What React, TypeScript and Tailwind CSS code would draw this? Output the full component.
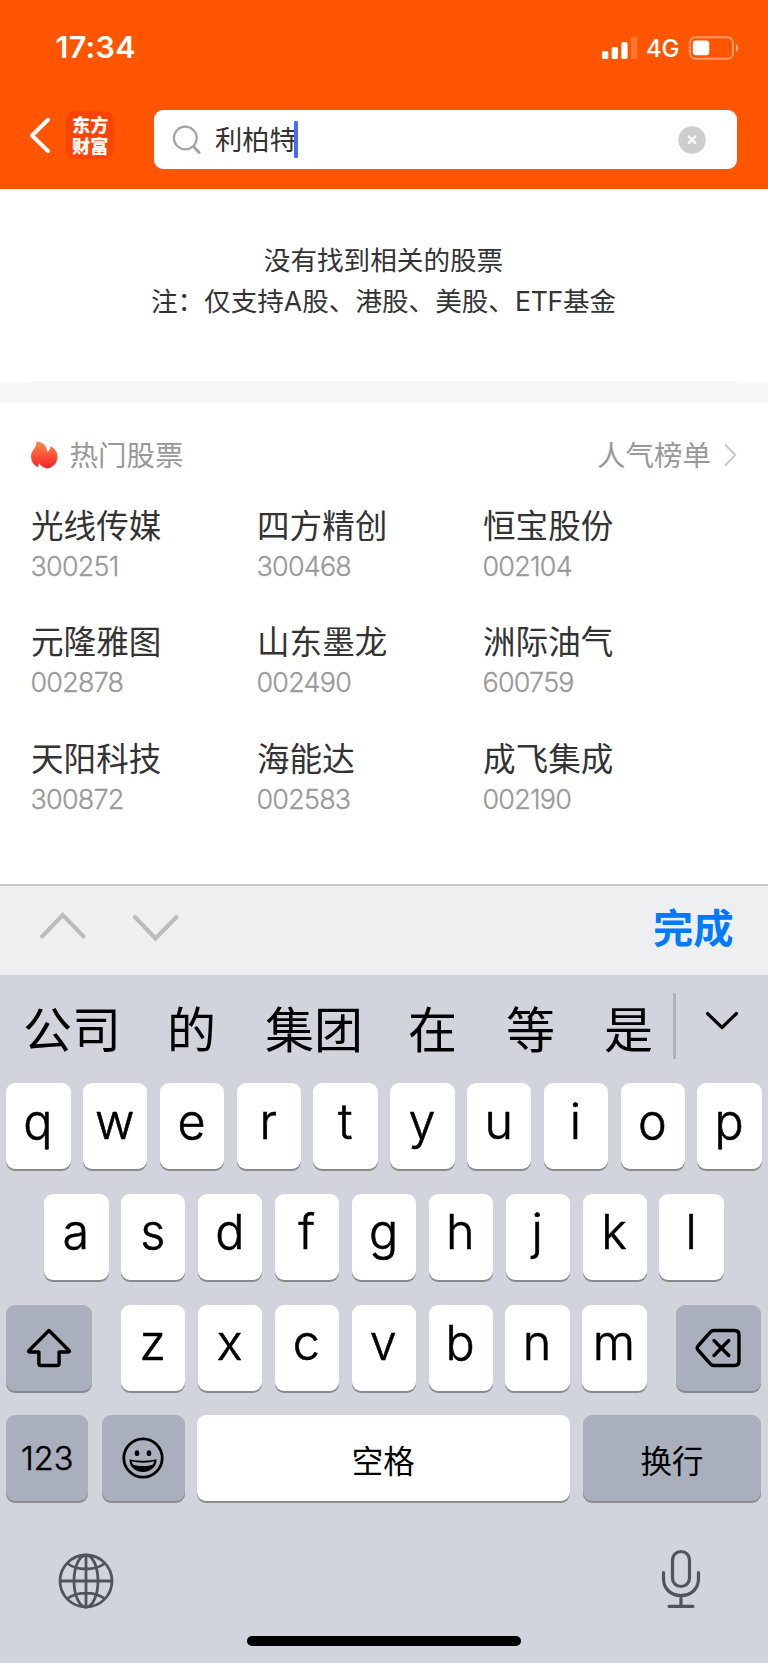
import React from "react";
import clsx from "clsx";

const stocks = [
  { name: "光线传媒", code: "300251" },
  { name: "四方精创", code: "300468" },
  { name: "恒宝股份", code: "002104" },
  { name: "元隆雅图", code: "002878" },
  { name: "山东墨龙", code: "002490" },
  { name: "洲际油气", code: "600759" },
  { name: "天阳科技", code: "300872" },
  { name: "海能达", code: "002583" },
  { name: "成飞集成", code: "002190" },
];

const candidates = [
  { text: "公司", className: "w-[98px] ml-[23px]" },
  { text: "的", className: "w-[49px] ml-[46px]" },
  { text: "集团", className: "w-[98px] ml-[49px]" },
  { text: "在", className: "w-[49px] ml-[45px]" },
  { text: "等", className: "w-[49px] ml-[49px]" },
  { text: "是", className: "w-[49px] ml-[49px]" },
];

export default function App() {
  return (
    <div className="w-[768px] h-[1663px] overflow-hidden bg-white flex flex-col font-['Inter','Noto_Sans_CJK_SC',sans-serif] text-[#333]">
      <Header />
      <EmptyResult />
      <HotStocks />
      <Keyboard />
    </div>
  );
}

const Header = () => (
  <header className="h-[188.5px] shrink-0 bg-[#ff5500] text-white">
    <div className="h-[96px] flex items-start pl-[55.5px] pr-[29px] pt-[31px]">
      <span className="text-[30.5px] leading-[32px] font-semibold tracking-[0.3px]">17:34</span>
      <div className="ml-auto mt-[1px] flex items-center h-[31px]">
        <svg width="36" height="24" viewBox="0 0 36 24" fill="#fff">
          <rect x="0" y="15" width="6.3" height="8" rx="1.8" />
          <rect x="9.7" y="11" width="6.3" height="12" rx="1.8" />
          <rect x="19.3" y="6" width="6.3" height="17" rx="1.8" />
          <rect x="29" y="1" width="6.3" height="22" rx="1.8" opacity=".2" />
        </svg>
        <span className="ml-[8px] w-[34px] text-[24px] leading-[31px] font-medium tracking-[-0.3px] pt-[1px]">4G</span>
        <svg className="ml-[8px]" width="51" height="24" viewBox="0 0 51 24" fill="none">
          <rect x="1.8" y="1.2" width="43.2" height="21.6" rx="5.6" stroke="#fff" strokeOpacity=".42" strokeWidth="2" />
          <rect x="4.8" y="4.6" width="16.4" height="14.6" rx="3" fill="#fff" />
          <path d="M48 8v8c3.2-1.6 3.2-6.4 0-8z" fill="#fff" fillOpacity=".5" />
        </svg>
      </div>
    </div>
    <div className="flex pl-[29px] pt-[14px]">
      <svg className="mt-[6px]" width="24" height="40" viewBox="0 0 24 40" fill="none" stroke="#fff" strokeWidth="4" strokeLinecap="round" strokeLinejoin="round">
        <path d="M19 3.8 3 19.5l16 15.5" />
      </svg>
      <div className="ml-[13px] mt-[1px] size-[48px] rounded-[9px] bg-[#ff4401] px-[6px] pt-[3px]">
        <p className="w-[37px] break-all font-['Noto_Sans_CJK_SC',sans-serif] font-black text-[18.2px] leading-[20.5px]">东方财富</p>
      </div>
      <div className="ml-[39.5px] w-[583.5px] h-[59px] rounded-[9px] bg-white flex items-center">
        <svg className="ml-[18px]" width="30" height="30" viewBox="0 0 30 30" fill="none" stroke="#a3a3a3" strokeWidth="2.2">
          <circle cx="13.3" cy="13" r="11.4" />
          <path d="m21.500 21.500 5.700 6" strokeWidth="2.8" strokeLinecap="round" />
        </svg>
        <span className="ml-[13.5px] mt-[2px] text-[27.3px] leading-[40px] text-[#333]">利柏特</span>
        <span className="-ml-[2.5px] w-[4px] h-[37px] rounded-[1px] bg-[#4a6cf5]" />
        <svg className="ml-auto mr-[31.5px]" width="28" height="28" viewBox="0 0 28 28" fill="none">
          <circle cx="14" cy="14" r="13.7" fill="#ccc" />
          <path d="m10.800 10.500 6.400 6.400m0-6.400-6.400 6.400" stroke="#fff" strokeWidth="2.4" strokeLinecap="round" />
        </svg>
      </div>
    </div>
  </header>
);

const EmptyResult = () => (
  <section className="h-[214.5px] shrink-0 flex flex-col">
    <div className="pt-[51px] pr-[1px] text-center text-[26.6px] leading-[41.3px]">
      <p>没有找到相关的股票</p>
      <p>
        注：仅支持A股、港股、美股、<span className="tracking-[-0.3px]">ETF</span>基金
      </p>
    </div>
    <div className="mt-auto mx-[31px] h-[2px] bg-[#f5f5f6]" />
    <div className="h-[20px] bg-[#f6f7f9]" />
  </section>
);

const HotStocks = () => (
  <section className="h-[481px] shrink-0 px-[31px]">
    <div className="flex items-center pt-[32px] h-[72px] text-[28.5px] leading-[40px] text-[#999]">
      <Flame />
      <span className="ml-[11.5px] mt-[1px]">热门股票</span>
      <span className="ml-auto mt-[1px]">人气榜单</span>
      <svg className="ml-[12px]" width="14" height="24" viewBox="0 0 14 24" fill="none" stroke="#c8c8c8" strokeWidth="2">
        <path d="m2 1.500 10.300 10.500L2 22.500" />
      </svg>
    </div>
    <div className="grid grid-cols-[226px_226px_226px] auto-rows-[116.7px] pt-[30.5px]">
      {stocks.map((stock) => (
        <div key={stock.code}>
          <p className="text-[32.6px] leading-[40px]">{stock.name}</p>
          <p className="-ml-[0.5px] text-[26.9px] leading-[41px] font-light text-[#999] tracking-[-0.75px] [-webkit-text-stroke:0.3px]">
            {stock.code}
          </p>
        </div>
      ))}
    </div>
  </section>
);

const Flame = () => (
  <svg width="27" height="28" viewBox="0 0 27 28">
    <defs>
      <linearGradient id="flame" x1="0" y1="0" x2="0" y2="1">
        <stop offset="0" stopColor="#fb8a48" />
        <stop offset="1" stopColor="#fb2028" />
      </linearGradient>
    </defs>
    <path
      fill="url(#flame)"
      d="M5.500.6c6 .4 10.500 4 10.800 10.600 2-1.200 3-3.500 3.200-6.200 4.300 2.300 7 6 7 10.700 0 6.300-4.500 10.800-10.500 11.800-3-1-5.800-2.300-8-5.300-.8 1.300-.9 2.600-.3 4.300C3.300 24.600 0 20.500 0 15.400 0 9.700 5.600 7.500 5.500.6z"
    />
  </svg>
);

const Keyboard = () => (
  <section className="flex-1 flex flex-col bg-[#d1d4dc] text-black">
    <div className="h-[91px] shrink-0 border-t-2 border-[#c5c6ca] bg-[#eeeff1] flex items-center">
      <svg className="ml-[39px] -mt-[9px]" width="48" height="30" viewBox="0 0 48 30" fill="none" stroke="#bcbcbd" strokeWidth="4" strokeLinecap="round">
        <path d="M3 25.500 23.800 4l20.800 21.500" />
      </svg>
      <svg className="ml-[45px] -mt-[8px]" width="48" height="30" viewBox="0 0 48 30" fill="none" stroke="#bcbcbd" strokeWidth="4" strokeLinecap="round">
        <path d="M3 5l20.500 21.500L44.500 5" />
      </svg>
      <span className="ml-auto mr-[34.5px] -mt-[4px] text-[40.3px] leading-[50px] font-semibold text-[#007aff]">完成</span>
    </div>

    <div className="h-[108.3px] shrink-0 flex items-start">
      {candidates.map(({ text, className }) => (
        <span key={text} className={clsx("shrink-0 whitespace-nowrap mt-[26px] text-[49px] leading-[60px]", className)}>
          {text}
        </span>
      ))}
      <span className="ml-[20px] mt-[18px] w-[2.5px] h-[66px] bg-[#aeb1b7]" />
      <svg className="ml-[29.5px] mt-[35px]" width="34" height="22" viewBox="0 0 34 22" fill="none" stroke="#000" strokeWidth="3.2" strokeLinecap="round" strokeLinejoin="round">
        <path d="M2.500 3.500 17 17.500 31.500 3.500" />
      </svg>
    </div>

    <div className="flex flex-col gap-[24.7px]">
      <div className="flex gap-[12.5px] pl-[6.3px]">
        <Letters row="qwertyuiop" />
      </div>
      <div className="flex gap-[12.6px] pl-[44.3px]">
        <Letters row="asdfghjkl" />
      </div>
      <div className="flex pl-[6.3px]">
        <Key dark className="w-[85.7px]">
          <svg width="46" height="40" viewBox="0 0 46 40" fill="none" stroke="#000" strokeWidth="3.4" strokeLinejoin="round">
            <path d="M23 2.500 2.800 22.700q-.8 1.300.8 1.300h9.300v11.500q0 2 2 2h16.200q2 0 2-2V24h9.300q1.600 0 .8-1.300z" />
          </svg>
        </Key>
        <div className="flex gap-[12.6px] mx-[29px]">
          <Letters row="zxcvbnm" />
        </div>
        <Key dark className="w-[85.7px]">
          <svg width="46" height="40" viewBox="0 0 46 40" fill="none" stroke="#000" strokeWidth="3.4" strokeLinejoin="round" strokeLinecap="round">
            <path d="M18.500 2.500h21q4.500 0 4.500 4.500v26q0 4.500-4.500 4.500h-21q-1.500 0-2.700-1.200L3 22q-1.600-2 0-4L15.800 3.700q1.200-1.200 2.700-1.200z" />
            <path d="m19 12.500 14.800 15m0-15L19 27.500" />
          </svg>
        </Key>
      </div>
      <div className="flex pl-[6.3px]">
        <Key dark className="w-[82px]">
          <span className="mt-[1px] text-[32.5px] leading-[40px] font-light [-webkit-text-stroke:0.5px]">123</span>
        </Key>
        <Key dark className="w-[83.6px] ml-[13.4px]">
          <Smiley />
        </Key>
        <Key className="w-[373px] ml-[11.5px]">
          <span className="mt-[8px] text-[31.5px] leading-[40px]">空格</span>
        </Key>
        <Key dark className="w-[178.3px] ml-[13px]">
          <span className="mt-[8px] text-[31.5px] leading-[40px]">换行</span>
        </Key>
      </div>
    </div>

    <div className="flex justify-between pl-[58px] pr-[67px] mt-[46px] h-[64px]">
      <Globe />
      <Mic />
    </div>
    <div className="mt-[24.5px] mx-auto w-[274.5px] h-[10.5px] rounded-full bg-black" />
  </section>
);

interface KeyProps {
  children: React.ReactNode;
  className?: string;
  dark?: boolean;
}

const Key = ({ children, className, dark }: KeyProps) => (
  <div
    className={clsx(
      "h-[86px] shrink-0 rounded-[9px] flex items-center justify-center shadow-[0_2px_0_#898a8d]",
      dark ? "bg-[#a9afbc]" : "bg-white",
      className
    )}
  >
    {children}
  </div>
);

const Letters = ({ row }: { row: string }) => (
  <>
    {row.split("").map((letter) => (
      <Key key={letter} className="w-[64.3px]">
        <span className="-mt-[9px] -ml-[1px] text-[48.5px] leading-[60px] font-light [-webkit-text-stroke:0.6px]">
          {letter}
        </span>
      </Key>
    ))}
  </>
);

const Smiley = () => (
  <svg width="42" height="42" viewBox="0 0 42 42" fill="none">
    <circle cx="21" cy="21" r="19.2" stroke="#000" strokeWidth="2.8" />
    <ellipse cx="15" cy="16.2" rx="2.3" ry="2.9" fill="#000" />
    <ellipse cx="27" cy="16.2" rx="2.3" ry="2.9" fill="#000" />
    <path d="M7.600 22c4.200 2.300 22.600 2.300 26.800 0 .8 7.500-5.700 13-13.400 13S6.800 29.500 7.600 22z" fill="#000" />
    <path d="M9.700 24.300c5 1.900 17.600 1.900 22.600 0-.4 1.500-.9 2.500-1.600 3.400-5 1.700-14.400 1.700-19.400 0-.7-.9-1.200-1.900-1.600-3.400z" fill="#a9afbc" />
  </svg>
);

const Globe = () => (
  <svg className="mt-[6px]" width="56" height="56" viewBox="0 0 56 56" fill="none" stroke="#50555d" strokeWidth="2.8">
    <circle cx="28" cy="28" r="26" />
    <ellipse cx="28" cy="28" rx="12" ry="26" />
    <path d="M28 2v52M2 28h52M9.500 10.500c9.500 7.300 27.500 7.300 37 0M9.500 45.500c9.500-7.300 27.500-7.300 37 0" />
  </svg>
);

const Mic = () => (
  <svg className="mt-[1.5px]" width="40" height="60" viewBox="0 0 40 60" fill="none" stroke="#50555d" strokeWidth="3.2" strokeLinecap="round">
    <rect x="11.5" y="2.5" width="17" height="35" rx="8.5" />
    <path d="M2.500 23.500v6c0 10 7 17 17.500 17s17.500-7 17.500-17v-6M20 46.500V57M8 57.300h24" />
  </svg>
);
